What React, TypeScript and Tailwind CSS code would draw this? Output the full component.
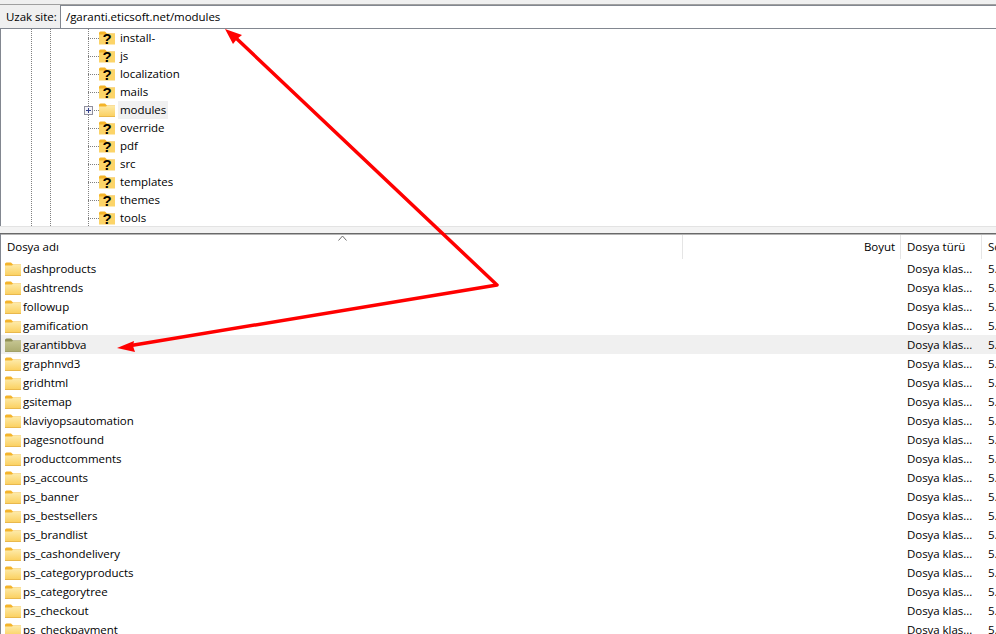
const treeItems = ["install-", "js", "localization", "mails", "modules", "override", "pdf", "src", "templates", "themes", "tools"];

const files = ["dashproducts", "dashtrends", "followup", "gamification", "garantibbva", "graphnvd3", "gridhtml", "gsitemap", "klaviyopsautomation", "pagesnotfound", "productcomments", "ps_accounts", "ps_banner", "ps_bestsellers", "ps_brandlist", "ps_cashondelivery", "ps_categoryproducts", "ps_categorytree", "ps_checkout", "ps_checkpayment"];

function Folder({ muted }: { muted?: boolean }) {
  const id = muted ? "folder-muted" : "folder-plain";
  return (
    <svg width="16" height="14" viewBox="0 0 16 14" className="shrink-0">
      <defs>
        <linearGradient id={id} x1="0" y1="0" x2="0" y2="1">
          <stop offset="0" stopColor={muted ? "#c4c490" : "#fdeaa8"} />
          <stop offset="1" stopColor={muted ? "#acac70" : "#fbd05f"} />
        </linearGradient>
      </defs>
      <path d="M0 2 Q0 0.5 1.5 0.5 H6 L8 2.5 H16 V5 H0 Z" fill={muted ? "#8f8f55" : "#f4b42a"} />
      <path d="M0 3.5 H7 L8 2.8 H16 V13.5 H0 Z" fill={`url(#${id})`} />
      <path d="M0 13.5 H16" stroke={muted ? "#a0a068" : "#e9b84c"} />
    </svg>
  );
}

function UnknownFolder() {
  return (
    <svg width="16" height="14" viewBox="0 0 16 14" className="shrink-0 overflow-visible">
      <path d="M0 2 Q0 0.5 1.5 0.5 H6 L8 2.5 H16 V5 H0 Z" fill="#f4b42a" />
      <path d="M0 3.5 H7 L8 2.8 H16 V13.5 H0 Z" fill="#fcd468" />
      <text x="8" y="13" textAnchor="middle" fontSize="15" fontWeight="700" fill="#000" fontFamily="Liberation Sans, sans-serif">?</text>
    </svg>
  );
}

function TreeRow({ name }: { name: string }) {
  const isModules = name === "modules";
  return (
    <div className="flex h-[18px] items-center">
      <div className="relative h-full w-[98px] shrink-0">
        {isModules && (
          <div className="absolute left-[83px] top-[5px] flex h-[9px] w-[9px] items-center justify-center border border-[#8f8f9d] bg-[#f4f4f8]">
            <div className="absolute h-[1px] w-[5px] bg-[#33408a]" />
            <div className="absolute h-[5px] w-[1px] bg-[#33408a]" />
          </div>
        )}
        <div className={`absolute top-[9px] right-0 h-0 border-t border-dotted border-[#808080] ${isModules ? "w-[5px]" : "w-[11px]"}`} />
      </div>
      {isModules ? <Folder /> : <UnknownFolder />}
      <span className={`ml-[3px] flex h-[18px] items-center px-[2px] ${isModules ? "bg-[#f0f0f0]" : ""}`}>{name}</span>
    </div>
  );
}

function FileRow({ name }: { name: string }) {
  const selected = name === "garantibbva";
  return (
    <div className={`flex h-[19px] shrink-0 items-center ${selected ? "bg-[#f0f0f0]" : ""}`}>
      <div className="flex w-[682px] shrink-0 items-center pl-[4px]">
        <Folder muted={selected} />
        <span className="ml-[2px]">{name}</span>
      </div>
      <div className="w-[218px] shrink-0" />
      <div className="w-[81px] shrink-0 pl-[6px]">Dosya klas...</div>
      <div className="pl-[6px]">5.</div>
    </div>
  );
}

export default function App() {
  return (
    <div className="relative flex h-[634px] w-[996px] flex-col overflow-hidden bg-white text-[11.5px] tracking-[-0.05px] text-[#000] [font-family:'Open_Sans','Noto_Sans',sans-serif]">
      <div className="h-[4px] shrink-0 bg-[#f0f0f0]" />
      <div className="h-[1px] shrink-0 bg-[#a0a0a0]" />

      {/* address bar */}
      <div className="flex h-[24px] shrink-0 border-b border-[#828790] bg-[#f0f0f0]">
        <div className="flex w-[60px] shrink-0 items-center pl-[6px]">Uzak site:</div>
        <div className="flex flex-1 items-center border-l border-t border-[#828790] bg-white pl-[5px]">/garanti.eticsoft.net/modules</div>
      </div>

      {/* remote tree */}
      <div className="relative h-[197px] shrink-0 overflow-hidden border-l border-[#828790]">
        <div className="absolute left-[30px] top-0 h-full border-l border-dotted border-[#808080]" />
        <div className="absolute left-[49px] top-0 h-full border-l border-dotted border-[#808080]" />
        <div className="absolute left-[87px] top-0 h-full border-l border-dotted border-[#808080]" />
        {treeItems.map((name) => (
          <TreeRow key={name} name={name} />
        ))}
      </div>

      {/* splitter */}
      <div className="h-[7px] shrink-0 border-t border-[#e3e3e3] bg-[#f3f3f3]" />
      <div className="h-[1px] shrink-0 bg-[#696969]" />

      {/* file list */}
      <div className="flex min-h-0 flex-1 flex-col overflow-hidden border-l border-[#828790]">
        <div className="relative flex h-[25px] shrink-0 items-center border-t border-[#b4b4b4]">
          <div className="flex h-full w-[682px] shrink-0 items-center border-r border-[#e5e5e5] pl-[6px]">Dosya adı</div>
          <div className="flex h-full w-[218px] shrink-0 items-center justify-end border-r border-[#e5e5e5] pr-[5px]">Boyut</div>
          <div className="flex h-full w-[81px] shrink-0 items-center border-r border-[#e5e5e5] pl-[6px]">Dosya türü</div>
          <div className="pl-[6px]">So</div>
          <svg width="9" height="6" viewBox="0 0 9 6" className="absolute left-[337px] top-0">
            <path d="M0.5 5.5 L4.5 1 L8.5 5.5" fill="none" stroke="#707070" />
          </svg>
        </div>
        {files.map((name) => (
          <FileRow key={name} name={name} />
        ))}
      </div>

      {/* annotation arrows */}
      <svg width="996" height="634" viewBox="0 0 996 634" className="pointer-events-none absolute left-0 top-0">
        <path d="M236 38 L497 285 L128 346" fill="none" stroke="#ff0000" strokeWidth="3.5" strokeLinejoin="round" />
        <path d="M225 29 L242 35 L237 39 L233 44 Z" fill="#ff0000" />
        <path d="M117 348 L134 341 L133 346 L135 352 Z" fill="#ff0000" />
      </svg>
    </div>
  );
}
